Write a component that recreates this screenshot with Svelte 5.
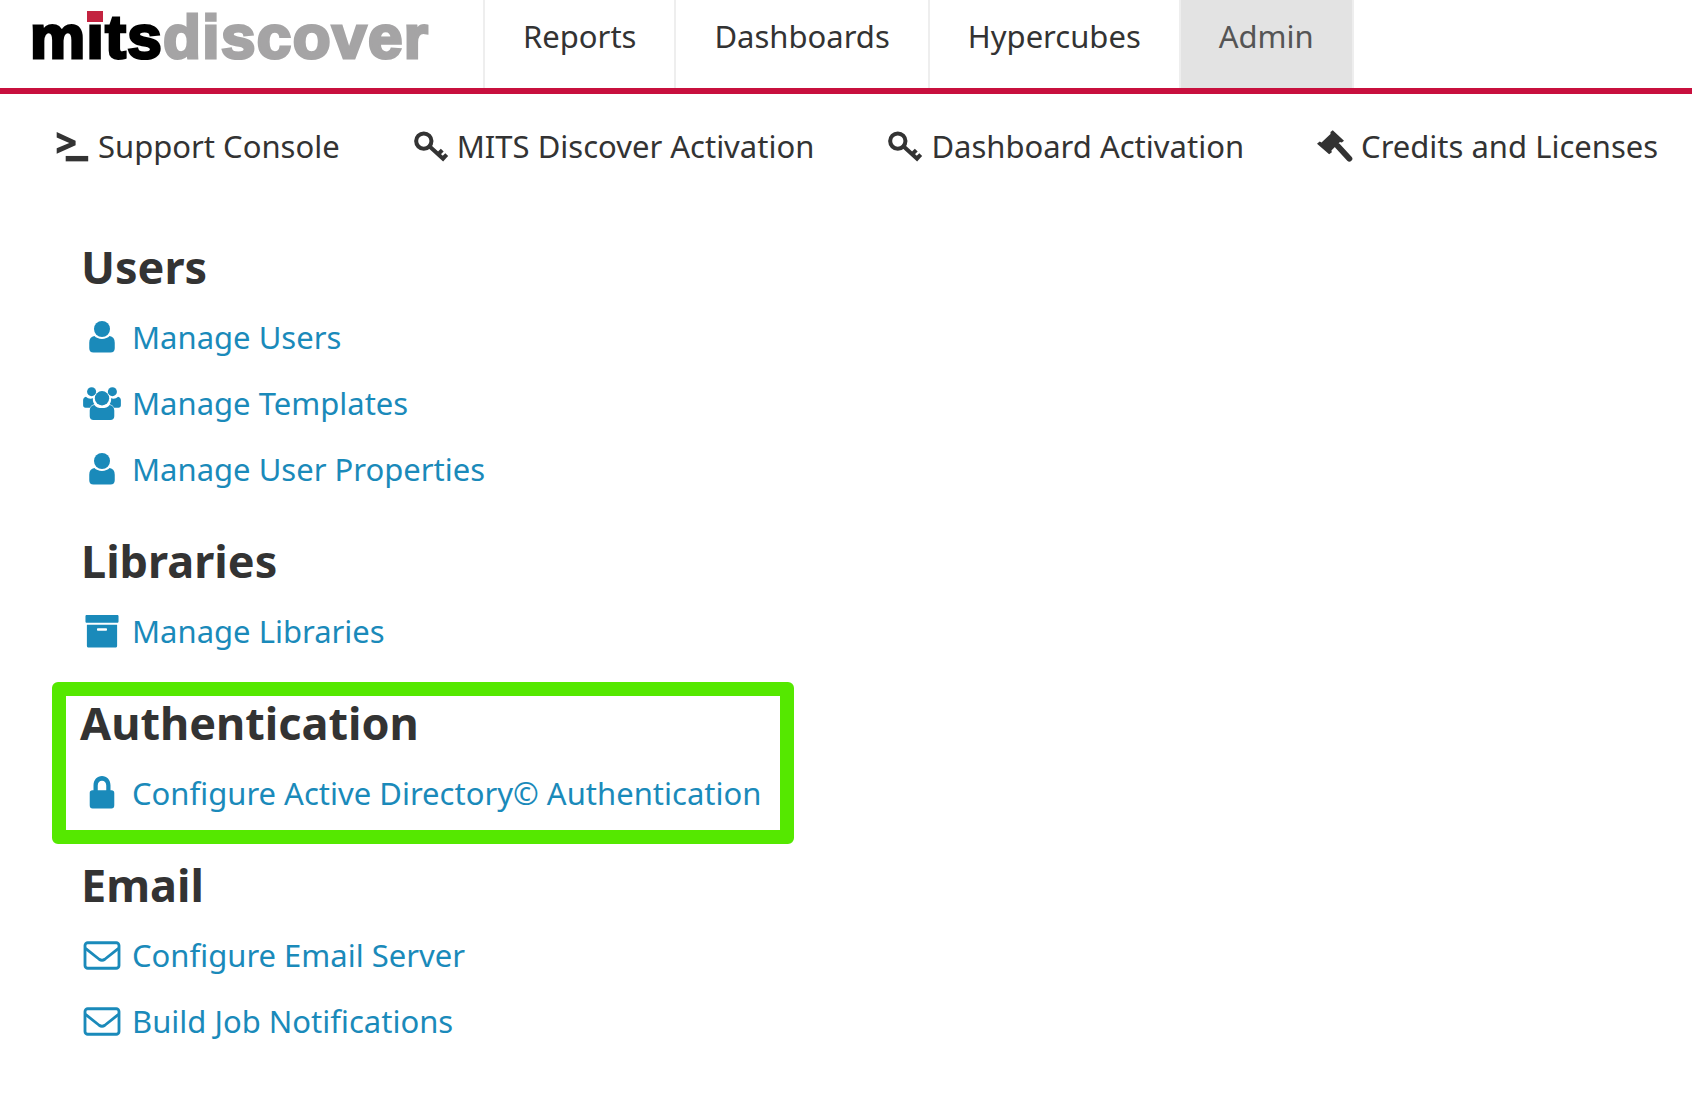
<script>
    const tabs = ['Reports', 'Dashboards', 'Hypercubes', 'Admin'];

    const tools = [
        { icon: 'terminal', label: 'Support Console' },
        { icon: 'key', label: 'MITS Discover Activation' },
        { icon: 'key', label: 'Dashboard Activation' },
        { icon: 'gavel', label: 'Credits and Licenses' }
    ];

    const sections = [
        {
            title: 'Users',
            links: [
                { icon: 'user', label: 'Manage Users' },
                { icon: 'users', label: 'Manage Templates' },
                { icon: 'user', label: 'Manage User Properties' }
            ]
        },
        { title: 'Libraries', links: [{ icon: 'archive', label: 'Manage Libraries' }] },
        {
            title: 'Authentication',
            boxed: true,
            links: [{ icon: 'lock', label: 'Configure Active Directory© Authentication' }]
        },
        {
            title: 'Email',
            links: [
                { icon: 'mail', label: 'Configure Email Server' },
                { icon: 'mail', label: 'Build Job Notifications' }
            ]
        }
    ];
</script>

{#snippet icon(name)}
    <svg class="icon {name}" viewBox="0 0 40 36" aria-hidden="true">
        {#if name === 'terminal'}
            <path d="M3 2 L24 11.5 V16.5 L3 26 V20 L17 14 L3 8 Z" />
            <rect x="13" y="28.5" width="25" height="6" />
        {:else if name === 'key'}
            <circle class="stroke" cx="12" cy="12" r="8.500" />
            <path class="stroke" d="M18.500 18 L35 33 M28 26.500 L32.500 22 M33.500 31 L37.500 27" />
        {:else if name === 'gavel'}
            <path d="M0 15 L3 12.500 L5 13.500 L15 4 L15 2 L17.500 0 L30 11.500 L27.500 13.500 L25.500 13 L16 22.500 L16.500 24.500 L13.500 26.500 Z" />
            <path class="stroke handle" d="M23 17.500 L36 31.500" />
        {:else if name === 'user'}
            <circle cx="20" cy="9.500" r="8.500" />
            <path d="M12 17 C15 21 25 21 28 17 C31.500 17.500 33.500 20 33.500 24 V30 C33.500 33 32 34.500 29 34.500 H11 C8 34.500 6.500 33 6.500 30 V24 C6.500 20 8.500 17.500 12 17 Z" />
        {:else if name === 'users'}
            <circle cx="9" cy="6" r="4.800" />
            <circle cx="31" cy="6" r="4.800" />
            <path d="M3 11.500 C5 13.500 8 14 10.500 13 C10 15 10.500 17.500 12 19.300 C9.500 20 8 21 7.500 23 H2.500 C1 23 0 22 0 20.500 V15 C0 13.500 1.200 12 3 11.500 Z" />
            <path d="M37 11.500 C35 13.500 32 14 29.500 13 C30 15 29.500 17.500 28 19.300 C30.500 20 32 21 32.500 23 H37.500 C39 23 40 22 40 20.500 V15 C40 13.500 38.800 12 37 11.500 Z" />
            <circle cx="20" cy="13" r="7.600" />
            <path d="M12 20 C15 24.500 25 24.500 28 20 C31 20.500 33 22.500 33 26 V32 C33 34.500 31.500 36 29 36 H11 C8.500 36 7 34.500 7 32 V26 C7 22.500 9 20.500 12 20 Z" />
        {:else if name === 'archive'}
            <path fill-rule="evenodd" d="M4 1 H36 C37 1 37.500 1.500 37.500 2.500 V8 C37.500 8.800 37 9.300 36 9.300 H4 C3 9.300 2.500 8.800 2.500 8 V2.500 C2.500 1.500 3 1 4 1 Z M4 11.500 H36 V33.500 C36 35 35 35.500 34 35.500 H6 C5 35.500 4 35 4 33.500 Z M16 15 C15 15 14.700 15.500 14.700 16.300 C14.700 17.200 15 17.700 16 17.700 H24 C25 17.700 25.300 17.200 25.300 16.300 C25.300 15.500 25 15 24 15 Z" />
        {:else if name === 'lock'}
            <path fill-rule="evenodd" d="M11 15 V10 C11 4 15 0 20 0 C25 0 29 4 29 10 V15 H30 C32 15 33 16 33 18 V31 C33 33.500 32 34.500 30 34.500 H10 C8 34.500 7 33.500 7 31 V18 C7 16 8 15 10 15 Z M15.500 15 H24.500 V10 C24.500 7 22.500 5 20 5 C17.500 5 15.500 7 15.500 10 Z" />
        {:else if name === 'mail'}
            <rect class="line" x="2" y="5" width="36" height="27" rx="3" />
            <path class="line" d="M2.500 11 L17 22.500 C19 24 21 24 23 22.500 L37.500 11" />
        {/if}
    </svg>
{/snippet}

<header>
    <div class="logo">
        <span class="mits">mits<span class="dot"></span></span><span class="discover">discover</span>
    </div>
    <nav>
        {#each tabs as tab}
            <a href="#{tab}" class:active={tab === 'Admin'}>{tab}</a>
        {/each}
    </nav>
</header>

<div class="tools">
    {#each tools as tool}
        <a href="#{tool.label}">
            {@render icon(tool.icon)}
            {tool.label}
        </a>
    {/each}
</div>

<main>
    {#each sections as section}
        <section class:boxed={section.boxed}>
            <h2>{section.title}</h2>
            {#each section.links as link}
                <a class="row" href="#{link.label}">
                    <span class="slot">{@render icon(link.icon)}</span>
                    {link.label}
                </a>
            {/each}
        </section>
    {/each}
</main>

<style>
    :global(body) {
        background: #fff;
        color: #333;
        font-family: "Noto Sans", "Open Sans", sans-serif;
    }

    header {
        display: flex;
        height: 88px;
        border-bottom: 6px solid #c8103e;
    }

    .logo {
        width: 483px;
        padding-left: 30px;
        box-sizing: border-box;
        white-space: nowrap;
        font-family: "Liberation Sans", sans-serif;
        font-weight: bold;
        font-size: 62px;
        line-height: 74px;
        letter-spacing: 1.4px;
        -webkit-text-stroke: 3px currentColor;
    }

    .mits {
        position: relative;
        color: #000;
    }

    .dot {
        position: absolute;
        left: 57px;
        top: 9px;
        width: 16px;
        height: 11px;
        background: #c32340;
    }

    .discover {
        color: #a5a4a5;
    }

    nav {
        display: flex;
    }

    nav a {
        display: flex;
        align-items: center;
        height: 88px;
        padding: 0 38px 16px;
        box-sizing: border-box;
        border-left: 2px solid #eee;
        color: #333;
        text-decoration: none;
        font-size: 31px;
    }

    nav a.active {
        background: #e3e3e3;
        color: #555;
        border-right: 2px solid #eee;
    }

    .tools {
        display: flex;
        gap: 73px;
        padding: 30px 0 40px 54px;
    }

    .tools a {
        display: flex;
        align-items: center;
        gap: 8px;
        height: 44px;
        color: #333;
        text-decoration: none;
        font-size: 31px;
        white-space: nowrap;
    }

    .tools .icon {
        width: 36px;
        height: 33px;
        fill: #333;
    }

    .tools .stroke {
        fill: none;
        stroke: #333;
        stroke-width: 4.5;
    }

    .tools .stroke.handle {
        stroke-width: 6.5;
        stroke-linecap: round;
    }

    main {
        padding: 32px 0 0 81px;
    }

    section {
        margin-bottom: 32px;
    }

    h2 {
        margin: 0 0 10px;
        height: 54px;
        line-height: 54px;
        font-size: 45px;
        font-weight: 700;
        color: #333;
    }

    section.boxed {
        width: 742px;
        box-sizing: border-box;
        margin: -14px 0 14px -29px;
        padding: 0 0 4px 14px;
        border: 14px solid #55e800;
        border-radius: 6px;
    }

    section.boxed .row {
        margin-left: 1px;
    }

    .row {
        display: flex;
        align-items: center;
        gap: 10px;
        height: 66px;
        color: #1a8aba;
        text-decoration: none;
        font-size: 31px;
        white-space: nowrap;
    }

    .slot {
        display: flex;
        justify-content: center;
        width: 41px;
    }

    .row .icon {
        width: 38px;
        height: 34px;
        fill: #1a8aba;
    }

    .icon .line {
        fill: none;
        stroke: #1a8aba;
        stroke-width: 3;
    }
</style>
